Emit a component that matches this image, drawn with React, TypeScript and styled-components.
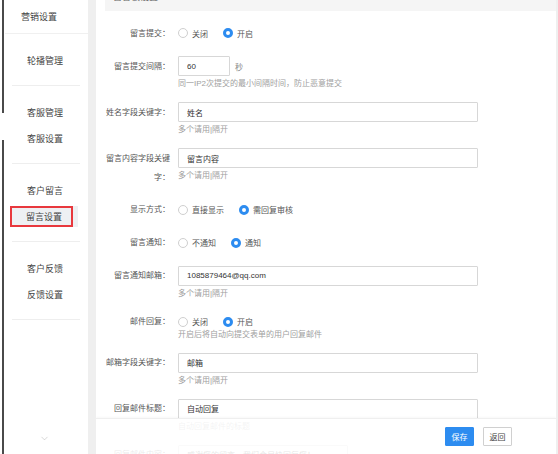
import React from 'react';
import styled, { createGlobalStyle } from 'styled-components';
import { ChevronDown } from 'lucide-react';

const GlobalStyle = createGlobalStyle`
  html, body {
    margin: 0;
    padding: 0;
    background: #efefef;
    font-family: "Liberation Sans", "Noto Sans CJK SC", sans-serif;
  }
  * {
    box-sizing: border-box;
  }
`;

const blue = '#2d8cf0';

interface ISideGroup {
  items: string[];
}

const groups: ISideGroup[] = [
  { items: ['轮播管理'] },
  { items: ['客服管理', '客服设置'] },
  { items: ['客户留言', '留言设置'] },
  { items: ['客户反馈', '反馈设置'] },
];

const activeItem = '留言设置';

const Page = styled.div`
  display: flex;
  width: 558px;
  height: 454px;
  overflow: hidden;
  background: #efefef;
`;

const Sidebar = styled.nav`
  width: 88px;
  flex-shrink: 0;
  display: flex;
  flex-direction: column;
  background:
    linear-gradient(#4a4a4a, #4a4a4a) 2px 0 / 2px 113px no-repeat,
    linear-gradient(#4a4a4a, #4a4a4a) 2px 140px / 2px 314px no-repeat,
    #fff;
`;

const SideHeader = styled.div`
  height: 34px;
  padding-left: 21px;
  margin-left: 5px;
  display: flex;
  align-items: center;
  font-size: 9px;
  color: #444;
  border-bottom: 1px solid #f0f0f0;
  padding-left: 16px;
`;

const SideGroup = styled.div`
  margin: 0 8px 0 12px;
  padding: 13px 0 12px;
  border-bottom: 1px solid #eeeeee;
`;

const SideItem = styled.div`
  height: 26px;
  display: flex;
  align-items: center;
  justify-content: center;
  font-size: 9px;
  color: #444;
  padding-right: 2px;
`;

const ActiveBox = styled.div`
  position: relative;
  width: 100%;
  height: 21px;
  display: flex;
  align-items: center;
  justify-content: center;
  background: #eef0f3;
  padding-right: 2px;
`;

const RedMark = styled.span`
  position: absolute;
  left: -2px;
  top: 0;
  width: 63px;
  height: 21px;
  border: 2px solid #e8383d;
`;

const SideFooter = styled.div`
  flex: 1;
  display: flex;
  align-items: flex-end;
  justify-content: center;
  padding-bottom: 10px;
  color: #aaa;
`;

const Main = styled.main`
  position: relative;
  flex: 1;
  margin: 0 2px 0 8px;
  background: #fff;
  overflow: hidden;
`;

const TitleBar = styled.div`
  height: 11px;
  margin-left: 9px;
  background: #f5f5f5;
  overflow: hidden;
  padding-left: 8px;
`;

const TitleText = styled.div`
  margin-top: -8px;
  font-size: 9px;
  line-height: 10px;
  color: #666;
`;

const Form = styled.div`
  display: flex;
  flex-direction: column;
  gap: 13px;
  padding: 12px 0 0 6px;
`;

const Row = styled.div<{ $faded?: boolean }>`
  display: flex;
  align-items: flex-start;
  gap: 8px;
`;

const Label = styled.div`
  width: 68px;
  flex-shrink: 0;
  text-align: right;
  font-size: 8px;
  line-height: 19px;
  min-height: 20px;
  padding-top: 0.5px;
  color: #555;
`;

const Field = styled.div`
  display: flex;
  flex-direction: column;
`;

const Line = styled.div`
  display: flex;
  align-items: center;
  height: 20px;
`;

const Input = styled.input<{ $width: number }>`
  width: ${p => p.$width}px;
  height: 20px;
  border: 1px solid #d7d7d7;
  border-radius: 1px;
  padding: 0 0 0 8px;
  font-family: inherit;
  font-size: 8px;
  color: #333;
  outline: none;
  background: #fff;
`;

const Unit = styled.span`
  margin-left: 5px;
  font-size: 8px;
  color: #888;
`;

const Hint = styled.div<{ $tight?: boolean }>`
  margin-top: ${p => (p.$tight ? -2 : 3)}px;
  font-size: 8px;
  line-height: 10px;
  color: #a0a0a0;
  white-space: nowrap;
`;

const Option = styled.label`
  display: flex;
  align-items: center;
  margin-right: 15px;
  font-size: 8px;
  color: #555;
`;

const Dot = styled.span<{ $on: boolean }>`
  width: 10px;
  height: 10px;
  margin-right: 4px;
  border-radius: 50%;
  border: ${p => (p.$on ? `3px solid ${blue}` : '1px solid #cfcfcf')};
  background: #fff;
`;

const Footer = styled.div`
  position: absolute;
  left: 0;
  right: 0;
  bottom: 0;
  height: 36px;
  display: flex;
  align-items: center;
  justify-content: flex-end;
  gap: 9px;
  padding-right: 44px;
  background: rgba(255, 255, 255, 0.88);
  border-top: 1px solid #efefef;
  box-shadow: 0 -1px 2px rgba(0, 0, 0, 0.03);
`;

const Button = styled.button<{ $primary?: boolean }>`
  width: 29px;
  height: 19px;
  padding: 0;
  font-family: inherit;
  font-size: 8px;
  border-radius: 1px;
  border: 1px solid ${p => (p.$primary ? blue : '#d0d0d0')};
  background: ${p => (p.$primary ? blue : '#fff')};
  color: ${p => (p.$primary ? '#fff' : '#444')};
`;

const Radios = ({ options, value }: { options: string[]; value: string }) => (
  <Line>
    {options.map(o => (
      <Option key={o}>
        <Dot $on={o === value} />
        {o}
      </Option>
    ))}
  </Line>
);

const App = () => {
  return (
    <>
      <GlobalStyle />
      <Page>
        <Sidebar>
          <SideHeader>营销设置</SideHeader>
          {groups.map(g => (
            <SideGroup key={g.items[0]}>
              {g.items.map(item => (
                <SideItem key={item}>
                  {item === activeItem ? (
                    <ActiveBox>
                      <RedMark />
                      {item}
                    </ActiveBox>
                  ) : (
                    item
                  )}
                </SideItem>
              ))}
            </SideGroup>
          ))}
          <SideFooter>
            <ChevronDown size={11} strokeWidth={1} />
          </SideFooter>
        </Sidebar>

        <Main>
          <TitleBar>
            <TitleText>留言板设置</TitleText>
          </TitleBar>
          <Form>
            <Row>
              <Label>留言提交：</Label>
              <Radios options={['关闭', '开启']} value="开启" />
            </Row>
            <Row>
              <Label>留言提交间隔：</Label>
              <Field>
                <Line>
                  <Input $width={52} readOnly value="60" />
                  <Unit>秒</Unit>
                </Line>
                <Hint>同一IP2次提交的最小间隔时间，防止恶意提交</Hint>
              </Field>
            </Row>
            <Row>
              <Label>姓名字段关键字：</Label>
              <Field>
                <Input $width={300} readOnly value="姓名" />
                <Hint>多个请用|隔开</Hint>
              </Field>
            </Row>
            <Row>
              <Label>留言内容字段关键字：</Label>
              <Field>
                <Input $width={300} readOnly value="留言内容" />
                <Hint>多个请用|隔开</Hint>
              </Field>
            </Row>
            <Row>
              <Label>显示方式：</Label>
              <Radios options={['直接显示', '需回复审核']} value="需回复审核" />
            </Row>
            <Row>
              <Label>留言通知：</Label>
              <Radios options={['不通知', '通知']} value="通知" />
            </Row>
            <Row>
              <Label>留言通知邮箱：</Label>
              <Field>
                <Input $width={300} readOnly value="1085879464@qq.com" />
                <Hint>多个请用|隔开</Hint>
              </Field>
            </Row>
            <Row>
              <Label>邮件回复：</Label>
              <Field>
                <Radios options={['关闭', '开启']} value="开启" />
                <Hint $tight>开启后将自动向提交表单的用户回复邮件</Hint>
              </Field>
            </Row>
            <Row>
              <Label>邮箱字段关键字：</Label>
              <Field>
                <Input $width={300} readOnly value="邮箱" />
                <Hint>多个请用|隔开</Hint>
              </Field>
            </Row>
            <Row>
              <Label>回复邮件标题：</Label>
              <Field>
                <Input $width={300} readOnly value="自动回复" />
                <Hint>自动回复邮件的标题</Hint>
              </Field>
            </Row>
            <Row>
              <Label>回复邮件内容：</Label>
              <Field>
                <Input $width={170} readOnly value="感谢您的留言，我们会尽快回复您！" />
              </Field>
            </Row>
          </Form>
          <Footer>
            <Button $primary>保存</Button>
            <Button>返回</Button>
          </Footer>
        </Main>
      </Page>
    </>
  );
};

export default App;
